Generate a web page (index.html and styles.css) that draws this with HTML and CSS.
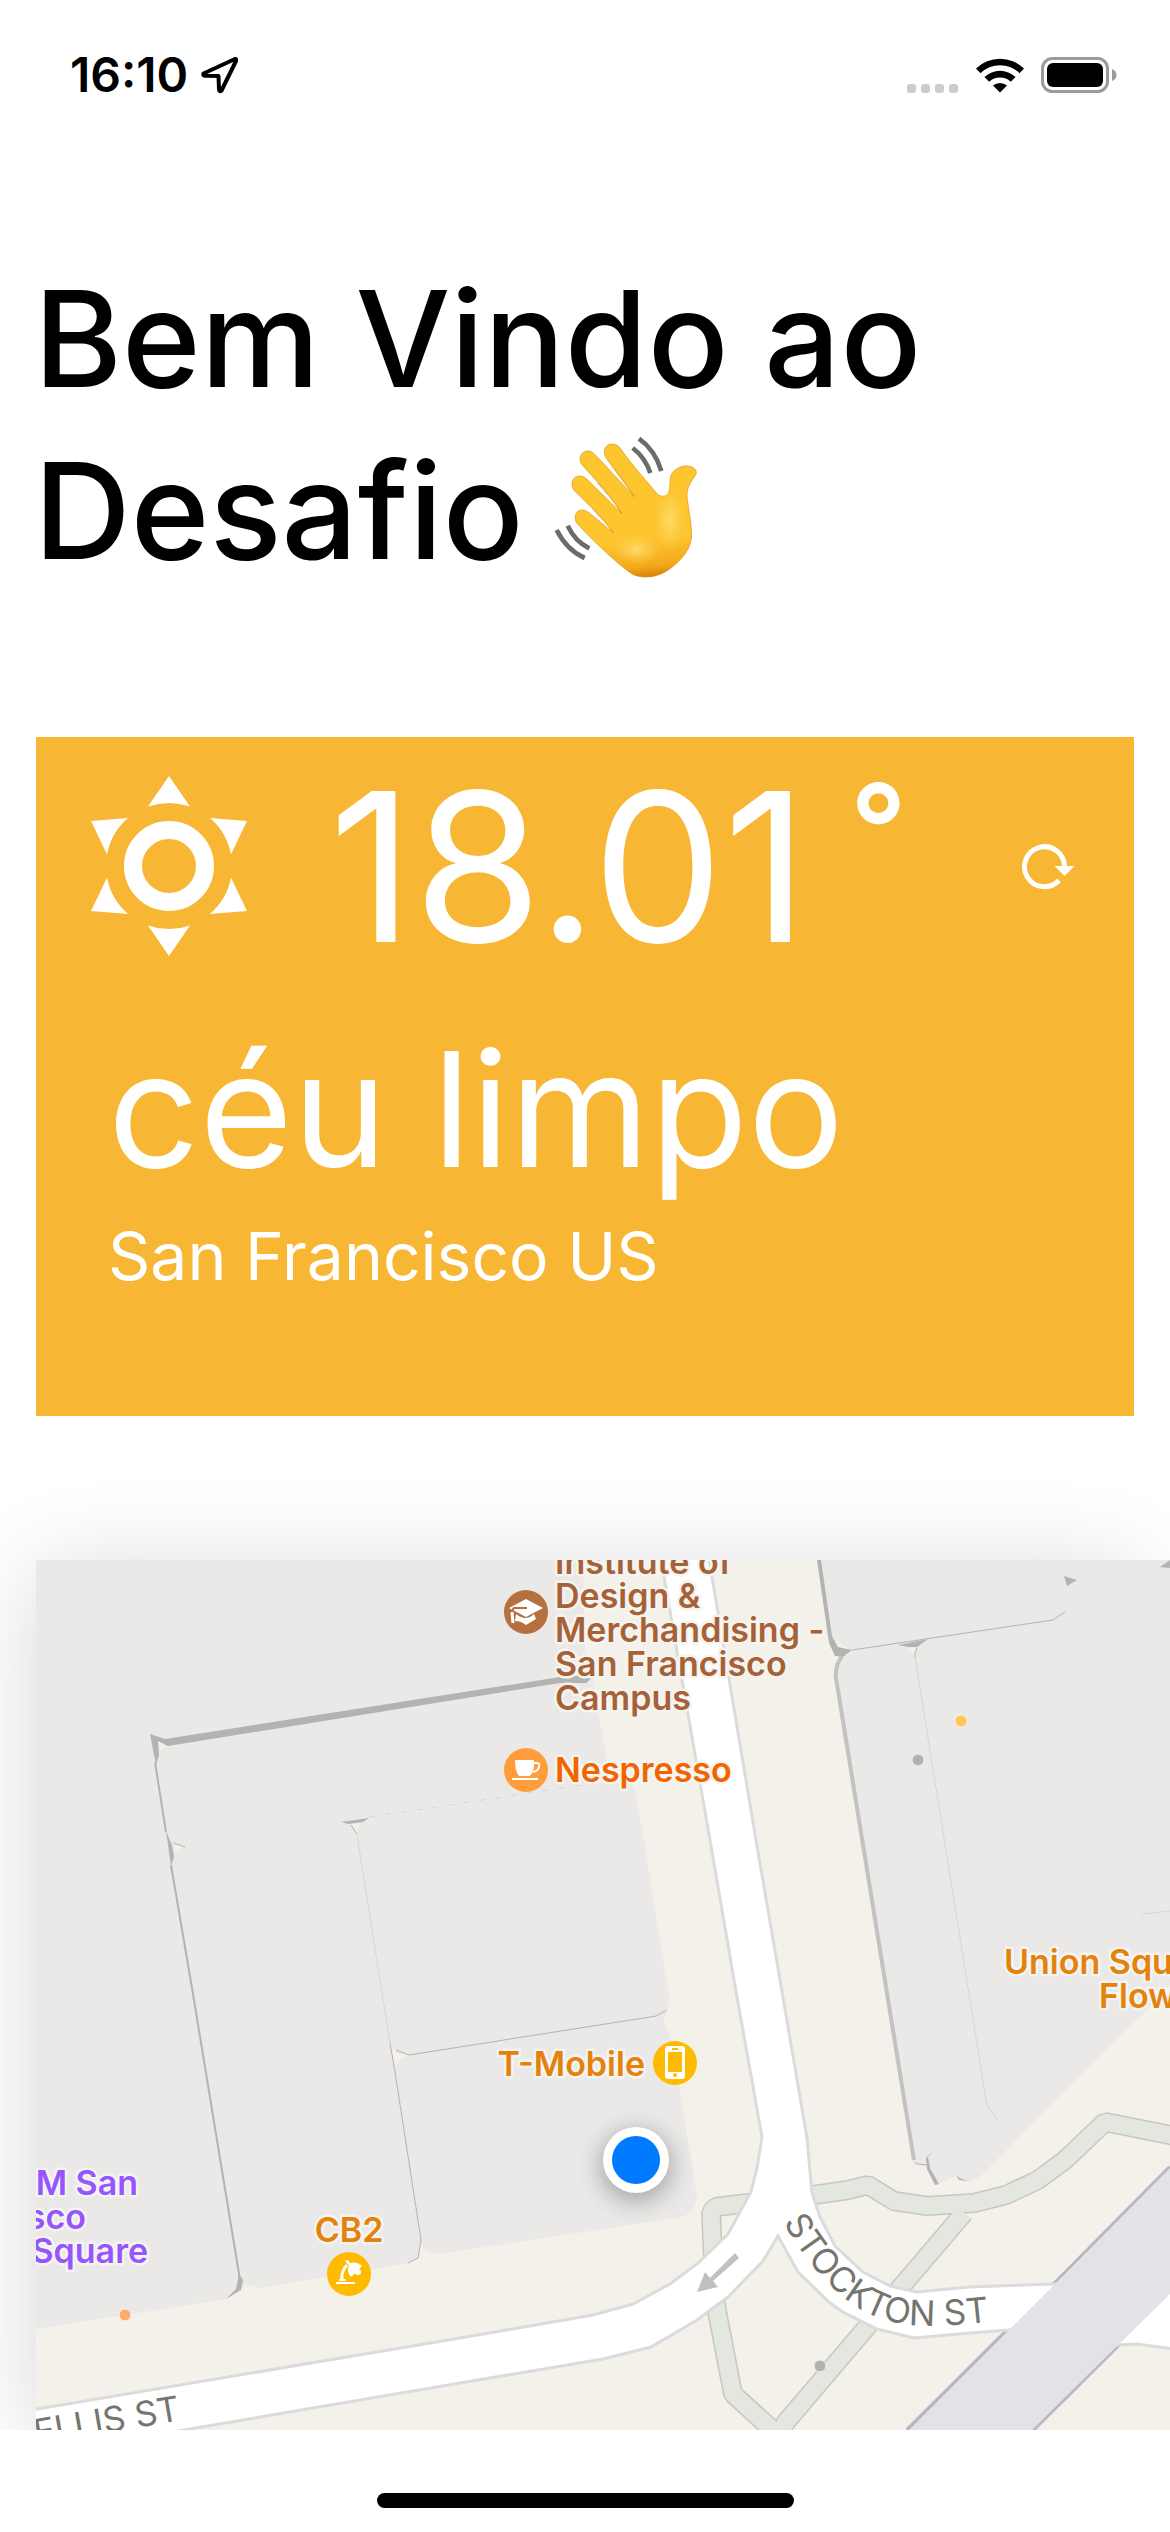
FILE: index.html
```html
<!DOCTYPE html>
<html lang="pt-BR">
<head>
<meta charset="utf-8">
<meta name="viewport" content="width=device-width, initial-scale=1">
<title>Desafio</title>
<link rel="stylesheet" href="styles.css">
</head>
<body>
<header class="status-bar">
  <div class="status-left">
    <time class="clock">16:10</time>
    <svg class="location-icon" viewBox="0 0 40 40" aria-hidden="true"><path d="M35 4 3.500 18.500Q2.500 20.500 5 20.800L18.500 21 19 34.500Q19.500 37.500 21.500 35.500L36 6Q36.500 3.500 35 4Z" fill="none" stroke="#000" stroke-width="4" stroke-linejoin="round"/></svg>
  </div>
  <div class="status-right">
    <svg class="signal-icon" viewBox="0 0 52 9" aria-hidden="true"><g fill="#ccc"><rect width="9" height="9" rx="3"/><rect x="14" width="9" height="9" rx="3"/><rect x="28" width="9" height="9" rx="3"/><rect x="42" width="9" height="9" rx="3"/></g></svg>
    <svg class="wifi-icon" viewBox="0 0 50 36" aria-hidden="true"><path d="M1 11.500a34.500 34.500 0 0 1 48 0l-4.500 4.700a28 28 0 0 0-39 0ZM9.500 20a22.500 22.500 0 0 1 31 0l-4.700 4.700a16 16 0 0 0-21.600 0ZM18 28.600a10.500 10.500 0 0 1 14 0l-7 7Z"/></svg>
    <svg class="battery-icon" viewBox="0 0 76 36" aria-hidden="true"><rect x="1.500" y="1.500" width="65" height="33" rx="10" fill="none" stroke="#9b9b9b" stroke-width="3"/><rect x="6" y="6" width="56" height="24" rx="6"/><path d="M71 12q4.500 2 4.500 6t-4.500 6Z" fill="#9b9b9b"/></svg>
  </div>
</header>

<main>
  <h1 class="welcome">Bem Vindo ao Desafio
    <svg class="wave" viewBox="0 0 480 480" role="img" aria-label="mão acenando">
      <defs>
        <linearGradient id="skin" x1="0.700" y1="0" x2="0.800" y2="1"><stop offset="0" stop-color="#fcc62f"/><stop offset="0.700" stop-color="#fdc52e"/><stop offset="0.900" stop-color="#f2a91a"/><stop offset="1" stop-color="#d27a05"/></linearGradient>
        <radialGradient id="glow"><stop offset="0" stop-color="#ffda68"/><stop offset="1" stop-color="#ffd358" stop-opacity="0"/></radialGradient>
      </defs>
      <path d="M265 440C230 420 140 335 96 286C84 268 92 246 112 246C124 246 134 256 144 264L206 315C180 275 130 230 86 186C74 166 84 144 104 144C116 144 124 152 132 160L231 257C200 205 150 155 109 108C99 88 110 68 130 69C142 70 150 80 158 88L268 206C240 160 210 130 181 86C173 66 182 49 200 48C214 47 223 56 231 68C262 112 310 165 336 197C347 208 363 208 370 196C380 172 368 148 386 130C402 113 430 108 448 121C458 131 454 138 445 152C430 172 424 186 427 215C432 250 440 290 440 325C438 362 410 398 370 426C335 450 295 452 265 440Z" fill="url(#skin)" stroke="#dc940f" stroke-width="2"/>
      <ellipse cx="375" cy="275" rx="45" ry="95" fill="url(#glow)"/>
      <ellipse cx="275" cy="365" rx="72" ry="45" fill="url(#glow)"/>
      <path d="M206 315Q180 280 144 244M231 257Q200 210 158 166M268 206Q240 170 208 122" fill="none" stroke="#c98409" stroke-width="3" opacity="0.500"/>
      <g fill="none" stroke="#696c6b" stroke-width="14"><path d="M282 32Q330 66 349 129M263 60Q300 88 316 135M35 306Q65 366 119 390M68 293Q90 340 133 361"/></g>
    </svg>
  </h1>

  <section class="weather">
    <div class="weather-now">
      <svg class="sun" viewBox="-90 -90 180 180" role="img" aria-label="sol">
        <defs><path id="ray" d="M0-90 21-59.400A63 63 0 0 0-21-59.400Z"/></defs>
        <circle r="36" fill="none" stroke="#fff" stroke-width="18"/>
        <g fill="#fff"><use href="#ray"/><use href="#ray" transform="rotate(60)"/><use href="#ray" transform="rotate(120)"/><use href="#ray" transform="rotate(180)"/><use href="#ray" transform="rotate(240)"/><use href="#ray" transform="rotate(300)"/></g>
      </svg>
      <span class="temperature">18.01<span class="degree">°</span></span>
      <button class="refresh" type="button" aria-label="Atualizar">
        <svg viewBox="0 0 54 48" aria-hidden="true"><path d="M38 38.500A20 20 0 1 1 43.500 24" fill="none" stroke="#fff" stroke-width="5"/><path d="M33.500 24H53.500L43.500 34Z" fill="#fff"/></svg>
      </button>
    </div>
    <p class="condition">céu limpo</p>
    <p class="city">San Francisco US</p>
  </section>

  <section class="map-area">
    <div class="map-card">
    <svg class="map" viewBox="36 1560 1134 870" preserveAspectRatio="xMinYMin slice" role="img" aria-label="Mapa">
      <defs>
        <path id="ellis" d="M0 2451 200 2417"/>
        <path id="stockton" d="M777 2209C796 2250 828 2290 862 2310S940 2328 1004 2320"/>
        <path id="walks" d="M780 2199 716 2207 711 2212 713 2258 716 2306 733 2394 776 2433 M964 2213 786 2422 776 2440M800 2197 814 2195 848 2190 868 2185 894 2201 927 2206 974 2203 1006 2195 1038 2180 1065 2160 1105 2122 1180 2137"/>
        <filter id="soft" x="-1" y="-1" width="3" height="3"><feGaussianBlur stdDeviation="12"/></filter>
      </defs>
      <rect x="36" y="1560" width="1134" height="870" fill="#f3f1ea"/>

      <!-- buildings -->
      <g fill="#eae9e7">
        <path d="M36 1560H583L585 1650 593 1680 607 1762 609 1780 628 1782 635 1789 644 1840 669 1997 667 2010 663 2021 669 2032 680 2090 697 2198 693 2210 683 2217 439 2254 427 2251 421 2245 418 2258 408 2263 260 2288 245 2284 241 2290 226 2299 36 2329Z"/>
        <path d="M821 1560H1170V1985L1143 2013 980 2177 968 2181 957 2175 937 2185 927 2165 916 2164 912 2158 836 1678 837 1662 852 1652 832 1637Z"/>
      </g>
      <g fill="#b3b3b1">
        <path d="M150 1734 165 1739 560 1677 586 1675 592 1678 586 1683 560 1683 168 1746 158 1741 159 1755 156 1765Z"/>
        <path d="M166 1831 172 1845 174 1857 171 1866ZM341 1822 369 1818 363 1822 348 1824ZM239 2274 243 2280 241 2290 226 2299 236 2289Z"/>
        <path d="M817 1560H821L832 1636 838 1647 852 1650 843 1657 835 1656 829 1643Z"/>
        <path d="M898 1645 928 1639 917 1647 909 1647ZM1064 1576 1077 1580 1067 1586ZM1160 1567 1170 1560V1568Z"/>
        <path d="M936 2148 928 2157 930 2168 939 2184 935 2185 927 2169 926 2158ZM956 2175 960 2178 968 2181 959 2180Z"/>
      </g>
      <g fill="#f3f1ea"><path d="M159 1742 167 1747 160 1751ZM174 1845 183 1847 175 1852ZM350 1825 360 1823 357 1833ZM391 2045 397 2053 408 2056 399 2060 396 2068ZM909 1648 917 1648 914 1655Z"/></g>
      <g fill="none" stroke="#b3b3b1">
        <path d="M155 1762 166 1832M171 1865 192 1988 240 2280" stroke-width="2"/>
        <path d="M842 1657Q835 1664 836 1678L914 2160" stroke="#c2c2c0" stroke-width="4"/>
        <path d="M390 2043 395 2072 421 2240 418 2258 408 2263M409 2055 656 2016 667 2010M396 2050 409 2055M852 1650 1053 1620 1065 1612M917 1648Q914 1652 915 1658M914 2162 917 2164 927 2165M174 1843 185 1847M351 1825 357 1834"/>
        <path d="M357 1835 390 2043M915 1657 987 2106 998 2120M1142 1914 1170 1911" stroke="#d7d6d4"/>
        <path d="M369 1817 582 1785" stroke="#d7d6d4" stroke-dasharray="6 10"/>
      </g>

      <!-- footpaths -->
      <g fill="none" stroke-linejoin="bevel"><use href="#walks" stroke="#c7c8bd" stroke-width="20"/><use href="#walks" stroke="#e4e6e0" stroke-width="17"/></g>

      <!-- streets -->
      <path d="M1170 2167 1068 2270 907 2430M1170 2294 1033 2430" fill="none" stroke="#b6b8bd" stroke-width="4"/>
      <path d="M656 1530 664 1577 710 1840 734 1980 762 2137 757 2168 751 2192 728 2234 698 2263 670 2284 633 2304 593 2315 460 2338 20 2412V2458L184 2430 460 2383 603 2359 651 2347 697 2320 728 2297 763 2261 778 2236 798 2272 830 2303 843 2312 877 2329 914 2338 970 2333 1010 2330 1117 2345 1137 2344 1180 2350V2281L1053 2284 970 2287 917 2292 890 2286 863 2272 835 2246 820 2217 812 2193 807 2138 780 1980 756 1840 712 1577 704 1530Z" fill="#fff" stroke="#dadcdb" stroke-width="3"/>
      <path d="M1170 2168 1068 2271 909 2430H1032L1170 2294Z" fill="#e2e3e7"/>
      <path d="M739 2258 713 2281 718 2287 697 2292 705 2272 710 2278 735 2253Z" fill="#c0c0c0"/>
      <g class="street"><text><textPath href="#ellis" startOffset="184" text-anchor="end">ELLIS ST</textPath></text><text><textPath href="#stockton" startOffset="50%" text-anchor="middle">STOCKTON ST</textPath></text></g>

      <!-- points of interest -->
      <g stroke="#f3f2ee" stroke-width="1"><circle cx="961" cy="1721" r="6" fill="#ffc857"/><circle cx="918" cy="1760" r="6" fill="#b3b2b1"/><circle cx="125" cy="2315" r="6" fill="#ffab6c"/><circle cx="820" cy="2366" r="6" fill="#b3b2b1"/></g>
      <circle cx="526" cy="1612" r="22" fill="#b4703f"/>
      <path d="M509 1608 526 1599 543 1608 526 1617ZM516 1614Q526 1622 534 1614L536 1619Q531 1622 526 1625 521 1621 515 1621Z" fill="#fff"/>
      <path d="M527 1608H514Q512 1609 513 1613" fill="none" stroke="#b4703f" stroke-width="2"/><path d="M512 1612 513 1623" stroke="#fff" stroke-width="3"/>
      <circle cx="526" cy="1770" r="22" fill="#ff9d3c"/>
      <path d="M515 1760H534Q535 1771 530 1776H519Q515 1771 515 1760ZM512 1778H538V1780H512Z" fill="#fff"/><path d="M534 1763H537Q540 1763 539 1767T533 1772" fill="none" stroke="#fff" stroke-width="2"/>
      <circle cx="675" cy="2063" r="22" fill="#fb0"/>
      <rect x="665" y="2046" width="20" height="33" rx="3" fill="#fff"/><path d="M668 2052H682V2072H668ZM672 2048H678V2050H672Z" fill="#fb0"/><circle cx="675" cy="2075" r="2" fill="#fb0"/>
      <circle cx="349" cy="2274" r="22" fill="#fb0"/>
      <path d="M336 2282H355V2284H336ZM339 2279H346V2281H339Z" fill="#fff"/><path d="M342 2280Q341 2271 347 2265" fill="none" stroke="#fff" stroke-width="3"/><path d="M345 2261 348 2260 350 2263Q357 2261 362 2266L351 2277Q346 2271 349 2266Z" fill="#fff"/><circle cx="358" cy="2272" r="3" fill="#fff"/>
      <g class="label">
        <text class="school" x="555" y="1574">Institute of</text>
        <text class="school" x="555" y="1608">Design &amp;</text>
        <text class="school" x="555" y="1642">Merchandising -</text>
        <text class="school" x="555" y="1676">San Francisco</text>
        <text class="school" x="555" y="1710">Campus</text>
        <text class="cafe" x="555" y="1782">Nespresso</text>
        <text class="shop" x="1004" y="1974">Union Squ</text>
        <text class="shop" x="1099" y="2008">Flow</text>
        <text class="shop" x="645" y="2076" text-anchor="end">T-Mobile</text>
        <text class="shop" x="349" y="2242" text-anchor="middle">CB2</text>
        <text class="hotel" x="138" y="2195" text-anchor="end">M San</text>
        <text class="hotel" x="86" y="2229" text-anchor="end">sco</text>
        <text class="hotel" x="148" y="2263" text-anchor="end">Square</text>
      </g>
      <circle cx="636" cy="2166" r="35" fill="#000" opacity="0.300" filter="url(#soft)"/>
      <circle cx="636" cy="2160" r="33" fill="#fff"/><circle cx="636" cy="2160" r="24" fill="#007aff"/>
    </svg>
    </div>
  </section>
</main>
<footer class="home"><div class="home-indicator"></div></footer>
</body>
</html>
```
FILE: styles.css
```css
* { box-sizing: border-box; margin: 0; }
body { background: #fff; color: #000; font-family: Inter, "Liberation Sans", sans-serif; }
svg { display: block; }

.status-bar { display: flex; justify-content: space-between; align-items: center; height: 150px; padding: 0 53px 0 70px; }
.status-left { display: flex; align-items: center; gap: 12px; }
.clock { font-size: 48px; font-weight: 600; line-height: 54px; }
.location-icon { width: 40px; height: 40px; }
.status-right { display: flex; align-items: flex-end; gap: 16px; }
.signal-icon { width: 52px; height: 9px; }
.wifi-icon { width: 50px; height: 36px; }
.battery-icon { width: 76px; height: 36px; }

.welcome { padding: 102px 34px 0; font-size: 134px; font-weight: 500; line-height: 172px; }
.wave { display: inline-block; width: 160px; height: 160px; margin-left: -14px; vertical-align: -29px; }

.weather { margin: 141px 36px 0; padding-bottom: 116px; background: #f7b633; color: #fff; }
.weather-now { display: flex; align-items: center; padding: 0 59px 0 43px; }
.sun { width: 180px; height: 180px; }
.temperature { margin-left: 70px; font-size: 208px; line-height: 258px; }
.degree { margin-left: 42px; font-size: 124px; font-weight: 600; line-height: 124px; vertical-align: 69px; }
.refresh { margin-left: auto; padding: 0; border: 0; background: none; }
.refresh svg { width: 54px; height: 48px; }
.condition { padding: 12px 72px 0; font-size: 160px; line-height: 204px; }
.city { padding: 1px 72px 0; font-size: 66px; line-height: 88px; }

.map-area { margin-top: 44px; padding: 100px 0 0 36px; overflow: hidden; }
.map-card { margin-right: 36px; box-shadow: 0 12px 90px rgba(0, 0, 0, 0.16); }
.map { width: calc(100% + 36px); aspect-ratio: 1134 / 870; }
.label { font-size: 34px; font-weight: 600; paint-order: stroke; stroke: #f5f4f1; stroke-width: 5px; stroke-linejoin: round; }
.school { fill: #a66236; }
.cafe { fill: #f06500; }
.shop { fill: #e3820c; }
.hotel { fill: #9655ff; }
.street { font-size: 35px; fill: #75756f; }

.home { display: flex; justify-content: center; padding: 63px 0 24px; }
.home-indicator { width: 417px; height: 15px; border-radius: 8px; background: #000; }
```
